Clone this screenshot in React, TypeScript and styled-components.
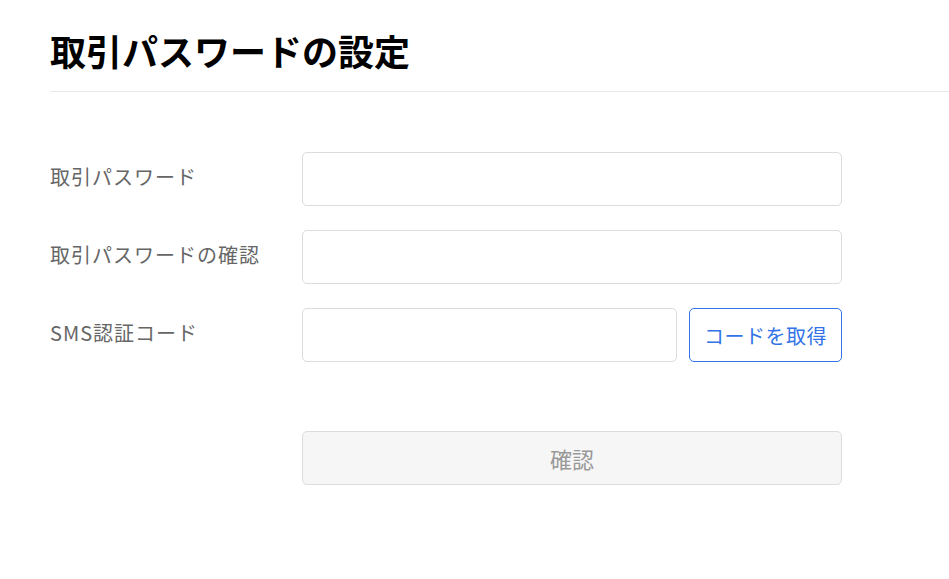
import React from 'react';
import styled, { createGlobalStyle } from 'styled-components';

const GlobalStyle = createGlobalStyle`
  html, body {
    margin: 0;
    padding: 0;
    background: #fff;
  }
  body {
    font-family: "Noto Sans CJK JP", "Noto Sans", sans-serif;
  }
`;

const Page = styled.div`
  padding: 27px 0 0 50px;
`;

const Title = styled.h1`
  margin: 0;
  padding-bottom: 18px;
  font-size: 36px;
  line-height: 46px;
  font-weight: 700;
  color: #000;
  border-bottom: 1px solid #e8e8e8;
`;

const Form = styled.form`
  display: flex;
  flex-direction: column;
  gap: 24px;
  padding-top: 60px;
  width: 792px;
`;

const Row = styled.div`
  display: grid;
  grid-template-columns: 252px 1fr;
  align-items: center;
`;

const Label = styled.label`
  font-size: 20px;
  line-height: 24px;
  padding-bottom: 5px;
  color: #666;
  letter-spacing: 1px;
`;

const Field = styled.div`
  display: flex;
  gap: 12px;
`;

const Input = styled.input`
  flex: 1;
  min-width: 0;
  height: 54px;
  box-sizing: border-box;
  border: 1px solid #dcdcdc;
  border-radius: 5px;
  background: #fff;
  padding: 0 14px;
  font-size: 18px;
  outline: none;
`;

const CodeButton = styled.button`
  width: 153px;
  height: 54px;
  box-sizing: border-box;
  border: 1px solid #3373e8;
  border-radius: 5px;
  background: #fff;
  color: #3373e8;
  font-family: inherit;
  font-size: 20px;
  letter-spacing: 0.5px;
  cursor: pointer;
`;

const Submit = styled.button<{ disabled?: boolean }>`
  width: 100%;
  height: 54px;
  box-sizing: border-box;
  border: 1px solid #dcdcdc;
  border-radius: 5px;
  background: #f6f6f6;
  color: #999;
  font-family: inherit;
  font-size: 22px;
  cursor: ${(p) => (p.disabled ? 'not-allowed' : 'pointer')};
`;

const SubmitRow = styled(Row)`
  margin-top: 45px;
`;

export default function App() {
  return (
    <>
      <GlobalStyle />
      <Page>
        <Title>取引パスワードの設定</Title>
        <Form onSubmit={(e) => e.preventDefault()}>
          <Row>
            <Label>取引パスワード</Label>
            <Field>
              <Input type="password" />
            </Field>
          </Row>
          <Row>
            <Label>取引パスワードの確認</Label>
            <Field>
              <Input type="password" />
            </Field>
          </Row>
          <Row>
            <Label>SMS認証コード</Label>
            <Field>
              <Input type="text" />
              <CodeButton type="button">コードを取得</CodeButton>
            </Field>
          </Row>
          <SubmitRow>
            <span />
            <Submit type="submit" disabled>
              確認
            </Submit>
          </SubmitRow>
        </Form>
      </Page>
    </>
  );
}
